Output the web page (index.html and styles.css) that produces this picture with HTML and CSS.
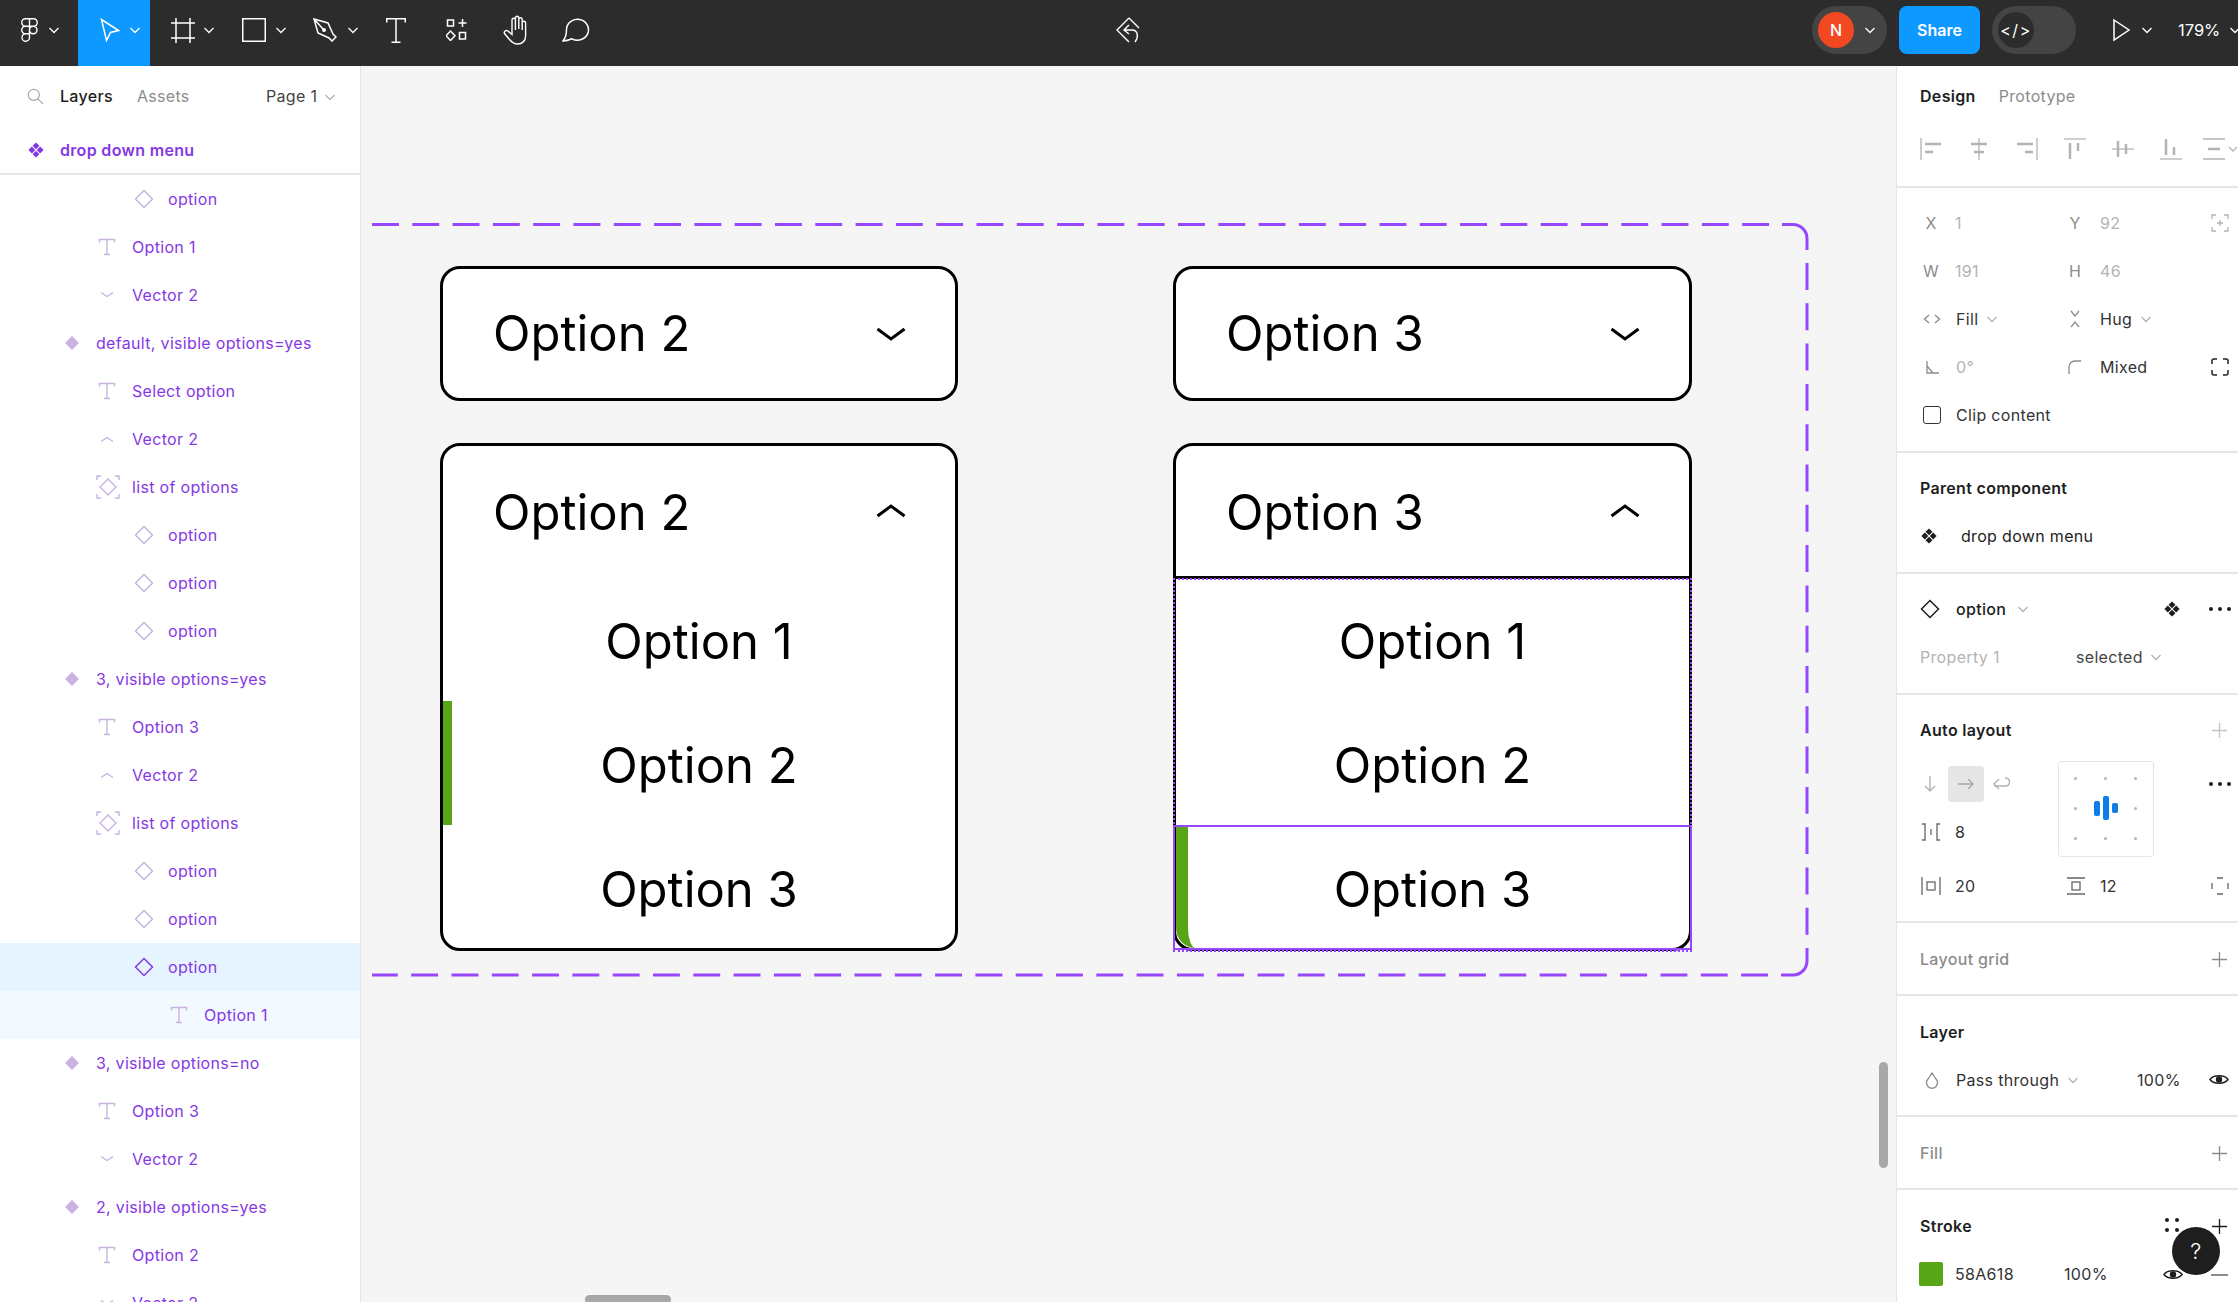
FILE: index.html
```html
<!DOCTYPE html>
<html lang="en">
<head>
<meta charset="utf-8">
<title>drop down menu</title>
<link rel="stylesheet" href="styles.css">
</head>
<body>
<svg class="defs" width="0" height="0" aria-hidden="true">
  <defs>
    <symbol id="i-diamond" viewBox="0 0 20 20"><path d="M10 1.500 18.500 10 10 18.500 1.500 10Z" fill="none" stroke="currentColor" stroke-width="1.500"/></symbol>
    <symbol id="i-solid" viewBox="0 0 20 20"><path d="M10 3 17 10 10 17 3 10Z" fill="currentColor"/></symbol>
    <symbol id="i-text" viewBox="0 0 20 20"><path d="M2.500 5.500V2.500H17.500V5.500M10 2.500V17.500M7 17.500H13" fill="none" stroke="currentColor" stroke-width="1.400"/></symbol>
    <symbol id="i-down" viewBox="0 0 20 20"><path d="M4 7.500 10 11.500 16 7.500" fill="none" stroke="currentColor" stroke-width="1.400"/></symbol>
    <symbol id="i-up" viewBox="0 0 20 20"><path d="M4 12.500 10 8.500 16 12.500" fill="none" stroke="currentColor" stroke-width="1.400"/></symbol>
    <symbol id="i-frame" viewBox="0 0 24 24"><path d="M1 5V1H5M19 1H23V5M1 19V23H5M19 23H23V19" fill="none" stroke="currentColor" stroke-width="1.400"/><path d="M12 4 20 12 12 20 4 12Z" fill="none" stroke="currentColor" stroke-width="1.400"/></symbol>
    <symbol id="i-comp" viewBox="0 0 20 20"><path fill="currentColor" d="M10 .5 14.300 4.800 10 9.100 5.700 4.800ZM10 10.900 14.300 15.200 10 19.500 5.700 15.200ZM4.800 5.700 9.100 10 4.800 14.300 .5 10ZM15.200 5.700 19.500 10 15.200 14.300 10.900 10Z"/></symbol>
    <symbol id="i-caret" viewBox="0 0 12 12"><path d="M1.500 4 6 8.500 10.500 4" fill="none" stroke="currentColor" stroke-width="1.300"/></symbol>
    <symbol id="i-plus" viewBox="0 0 18 18"><path d="M9 1V17M1 9H17" fill="none" stroke="currentColor" stroke-width="1.400"/></symbol>
    <symbol id="i-eye" viewBox="0 0 22 14"><path d="M1 7C5 1.500 17 1.500 21 7 17 12.500 5 12.500 1 7Z" fill="none" stroke="currentColor" stroke-width="1.500"/><circle cx="11" cy="7" r="3.500" fill="currentColor"/></symbol>
  </defs>
</svg>

<div class="app">
  <header class="toolbar">
    <div class="tool-group">
      <div class="tool tool-logo">
        <svg class="ti ti-logo" viewBox="0 0 17 24"><path d="M8.500 .75H4.500A3.750 3.750 0 0 0 4.500 8.250H8.500ZM8.500 .75H12.500A3.750 3.750 0 0 1 12.500 8.250H8.500ZM8.500 8.250H4.500A3.750 3.750 0 0 0 4.500 15.750H8.500ZM8.500 12A3.750 3.750 0 1 0 16 12 3.750 3.750 0 1 0 8.500 12ZM8.500 15.750H4.500A3.750 3.750 0 1 0 8.500 19.500Z" fill="none" stroke="currentColor" stroke-width="1.400"/></svg>
        <svg class="caret"><use href="#i-caret"/></svg>
      </div>
      <div class="tool tool-move">
        <svg class="ti ti-move" viewBox="0 0 20 24"><path d="M1.500 1.500 18.500 12.500 10.500 14.500 6.500 22.500Z" fill="none" stroke="currentColor" stroke-width="1.500"/></svg>
        <svg class="caret"><use href="#i-caret"/></svg>
      </div>
      <div class="tool tool-frame">
        <svg class="ti ti-frame" viewBox="0 0 24 25"><path d="M5 0V25M19 0V25M0 5H24M0 20H24" fill="none" stroke="currentColor" stroke-width="1.500"/></svg>
        <svg class="caret"><use href="#i-caret"/></svg>
      </div>
      <div class="tool tool-rect">
        <svg class="ti ti-rect" viewBox="0 0 24 24"><rect x=".75" y=".75" width="22.500" height="22.500" fill="none" stroke="currentColor" stroke-width="1.500"/></svg>
        <svg class="caret"><use href="#i-caret"/></svg>
      </div>
      <div class="tool tool-pen">
        <svg class="ti ti-pen" viewBox="0 0 24 24"><path d="M1 1 15 5 20 16 23 19 19 23 16 20 5 15ZM1 1 10 11" fill="none" stroke="currentColor" stroke-width="1.500"/><circle cx="11" cy="12" r="2" fill="currentColor"/></svg>
        <svg class="caret"><use href="#i-caret"/></svg>
      </div>
      <div class="tool tool-plain">
        <svg class="ti ti-type" viewBox="0 0 20 25"><path d="M.75 4.500V.75H19.250V4.500M10 .75V24.250M5.500 24.250H14.500" fill="none" stroke="currentColor" stroke-width="1.500"/></svg>
      </div>
      <div class="tool tool-plain">
        <svg class="ti ti-res" viewBox="0 0 21 22"><rect x="1.500" y="1" width="6" height="6" fill="none" stroke="currentColor" stroke-width="1.500"/><path d="M16.500 0V8M12.500 4H20.500" fill="none" stroke="currentColor" stroke-width="1.500"/><path d="M4.500 12 9 16.750 4.500 21.500 0 16.750Z" fill="none" stroke="currentColor" stroke-width="1.500"/><rect x="13.500" y="13.500" width="6" height="6.500" fill="none" stroke="currentColor" stroke-width="1.500"/></svg>
      </div>
      <div class="tool tool-plain">
        <svg class="ti ti-hand" viewBox="0 0 27 30"><path d="M9 15V5A1.700 1.700 0 0 1 12.400 5V15M12.400 14V3A1.700 1.700 0 0 1 15.800 3V14M15.800 14V4.500A1.700 1.700 0 0 1 19.200 4.500V15M19.200 15V8A1.700 1.700 0 0 1 22.600 8V21C22.600 26 19 29 14.500 29 10.500 29 8.500 27 6.500 24.500L1.500 18.500C.5 16.500 3 14.500 5 16L9 19.500V15" fill="none" stroke="currentColor" stroke-width="1.400"/></svg>
      </div>
      <div class="tool tool-plain">
        <svg class="ti ti-comment" viewBox="0 0 28 24"><path d="M4.500 11.500A11 10.500 0 1 1 10 20.800Q5 23 1 23 4.500 19 4.500 11.500Z" fill="none" stroke="currentColor" stroke-width="1.500"/></svg>
      </div>
    </div>

    <div class="tool-center">
      <svg class="ti ti-share" viewBox="0 0 26 26"><path d="M13 1 1 13 13 25M13 1 23 11" fill="none" stroke="currentColor" stroke-width="1.400"/><path d="M13 8 8 13 13 17M8 13H16C22 13 23 20 19 25" fill="none" stroke="currentColor" stroke-width="1.400"/></svg>
    </div>

    <div class="tool-right">
      <div class="avatar-pill">
        <span class="avatar">N</span>
        <svg class="caret"><use href="#i-caret"/></svg>
      </div>
      <span class="share-btn">Share</span>
      <div class="dev-toggle"><span class="dev-knob">&lt;/&gt;</span></div>
      <svg class="ti ti-play" viewBox="0 0 18 24"><path d="M1 2 16 12 1 22Z" fill="none" stroke="currentColor" stroke-width="1.500"/></svg>
      <svg class="caret caret-play"><use href="#i-caret"/></svg>
      <span class="zoom-level">179%</span>
      <svg class="caret caret-zoom"><use href="#i-caret"/></svg>
    </div>
  </header>

  <div class="workspace">
    <aside class="layers">
      <div class="layers-tabs">
        <svg class="search-icon" viewBox="0 0 20 20"><circle cx="8" cy="8" r="6.500" fill="none" stroke="currentColor" stroke-width="1.500"/><path d="M12.500 12.500 19 19" stroke="currentColor" stroke-width="1.500"/></svg>
        <span class="tab tab-active">Layers</span>
        <span class="tab">Assets</span>
        <span class="page-name">Page 1</span>
        <svg class="caret caret-page"><use href="#i-caret"/></svg>
      </div>
      <div class="layers-root">
        <svg class="root-icon"><use href="#i-comp"/></svg>
        <span>drop down menu</span>
      </div>
      <ul class="tree">
        <li class="row lv3"><svg class="ri"><use href="#i-diamond"/></svg>option</li>
        <li class="row lv2"><svg class="ri"><use href="#i-text"/></svg>Option 1</li>
        <li class="row lv2"><svg class="ri"><use href="#i-down"/></svg>Vector 2</li>
        <li class="row lv1"><svg class="ri"><use href="#i-solid"/></svg>default, visible options=yes</li>
        <li class="row lv2"><svg class="ri"><use href="#i-text"/></svg>Select option</li>
        <li class="row lv2"><svg class="ri"><use href="#i-up"/></svg>Vector 2</li>
        <li class="row lv2"><svg class="ri ri-frame"><use href="#i-frame"/></svg>list of options</li>
        <li class="row lv3"><svg class="ri"><use href="#i-diamond"/></svg>option</li>
        <li class="row lv3"><svg class="ri"><use href="#i-diamond"/></svg>option</li>
        <li class="row lv3"><svg class="ri"><use href="#i-diamond"/></svg>option</li>
        <li class="row lv1"><svg class="ri"><use href="#i-solid"/></svg>3, visible options=yes</li>
        <li class="row lv2"><svg class="ri"><use href="#i-text"/></svg>Option 3</li>
        <li class="row lv2"><svg class="ri"><use href="#i-up"/></svg>Vector 2</li>
        <li class="row lv2"><svg class="ri ri-frame"><use href="#i-frame"/></svg>list of options</li>
        <li class="row lv3"><svg class="ri"><use href="#i-diamond"/></svg>option</li>
        <li class="row lv3"><svg class="ri"><use href="#i-diamond"/></svg>option</li>
        <li class="row lv3 row-selected"><svg class="ri"><use href="#i-diamond"/></svg>option</li>
        <li class="row lv4 row-child"><svg class="ri"><use href="#i-text"/></svg>Option 1</li>
        <li class="row lv1"><svg class="ri"><use href="#i-solid"/></svg>3, visible options=no</li>
        <li class="row lv2"><svg class="ri"><use href="#i-text"/></svg>Option 3</li>
        <li class="row lv2"><svg class="ri"><use href="#i-down"/></svg>Vector 2</li>
        <li class="row lv1"><svg class="ri"><use href="#i-solid"/></svg>2, visible options=yes</li>
        <li class="row lv2"><svg class="ri"><use href="#i-text"/></svg>Option 2</li>
        <li class="row lv2"><svg class="ri"><use href="#i-down"/></svg>Vector 2</li>
      </ul>
    </aside>

    <main class="canvas">
      <!-- component set outline: dashed edges, with unbroken rounded corners on the right -->
      <svg class="set-outline" width="1450" height="770" viewBox="0 0 1450 770">
        <g fill="none" stroke="#9747ff" stroke-width="3">
          <path d="M11 2.500H1421" stroke-dasharray="26.900 13.400"/>
          <path d="M1421 2.500H1432A14 14 0 0 1 1446 16.500V28"/>
          <path d="M1446 41V713" stroke-dasharray="26.900 13.400"/>
          <path d="M1446 726V739A14 14 0 0 1 1432 753H1420"/>
          <path d="M1407 753H11" stroke-dasharray="26.900 13.400"/>
        </g>
      </svg>

      <section class="card closed c-left">
        <span class="head-label">Option 2</span>
        <svg class="chev" viewBox="0 0 30 14"><path d="M1.500 2 15 12 28.500 2" fill="none" stroke="#000" stroke-width="3"/></svg>
      </section>
      <section class="card closed c-right">
        <span class="head-label">Option 3</span>
        <svg class="chev" viewBox="0 0 30 14"><path d="M1.500 2 15 12 28.500 2" fill="none" stroke="#000" stroke-width="3"/></svg>
      </section>

      <section class="card open c-left">
        <div class="card-head">
          <span class="head-label">Option 2</span>
          <svg class="chev" viewBox="0 0 30 14"><path d="M1.500 12 15 2 28.500 12" fill="none" stroke="#000" stroke-width="3"/></svg>
        </div>
        <div class="opt">Option 1</div>
        <div class="opt opt-mark">Option 2</div>
        <div class="opt">Option 3</div>
      </section>

      <section class="card open c-right">
        <div class="card-head card-head-ruled">
          <span class="head-label">Option 3</span>
          <svg class="chev" viewBox="0 0 30 14"><path d="M1.500 12 15 2 28.500 12" fill="none" stroke="#000" stroke-width="3"/></svg>
        </div>
        <div class="opt">Option 1</div>
        <div class="opt">Option 2</div>
        <div class="opt opt-mark opt-last">Option 3</div>
        <span class="sel-list"></span>
        <span class="sel-item"></span>
      </section>

      <span class="scroll-v"></span>
      <span class="scroll-h"></span>
    </main>

    <aside class="props">
      <div class="props-tabs">
        <span class="tab tab-active tab-strong">Design</span>
        <span class="tab">Prototype</span>
      </div>

      <div class="p-sec align-row">
        <svg viewBox="0 0 22 22"><path d="M1 0V22" stroke="#b3b3b3" stroke-width="1.300"/><path d="M5 6H21M5 14H13" fill="none" stroke="#b3b3b3" stroke-width="2.500"/></svg>
        <svg viewBox="0 0 22 22"><path d="M11 0V22" stroke="#b3b3b3" stroke-width="1.300"/><path d="M3 6H19M6 14H16" fill="none" stroke="#b3b3b3" stroke-width="2.500"/></svg>
        <svg viewBox="0 0 22 22"><path d="M21 0V22" stroke="#b3b3b3" stroke-width="1.300"/><path d="M1 6H17M9 14H17" fill="none" stroke="#b3b3b3" stroke-width="2.500"/></svg>
        <svg viewBox="0 0 22 22"><path d="M0 1H22" stroke="#b3b3b3" stroke-width="1.300"/><path d="M6 5V21M14 5V13" fill="none" stroke="#b3b3b3" stroke-width="2.500"/></svg>
        <svg viewBox="0 0 22 22"><path d="M0 11H22" stroke="#b3b3b3" stroke-width="1.300"/><path d="M6 3V19M14 6V16" fill="none" stroke="#b3b3b3" stroke-width="2.500"/></svg>
        <svg viewBox="0 0 22 22"><path d="M0 21H22" stroke="#b3b3b3" stroke-width="1.300"/><path d="M6 1V17M14 9V17" fill="none" stroke="#b3b3b3" stroke-width="2.500"/></svg>
        <svg class="align-last" viewBox="0 0 36 22"><path d="M0 1H22M0 21H22" fill="none" stroke="#b3b3b3" stroke-width="1.300"/><path d="M5 11H17" stroke="#b3b3b3" stroke-width="2.500"/><path d="M26 9 30 13 34 9" fill="none" stroke="#b3b3b3" stroke-width="1.300"/></svg>
      </div>

      <div class="p-sec geom">
        <div class="g-row">
          <span class="g-lab">X</span><span class="g-val dim">1</span>
          <span class="g-lab g2">Y</span><span class="g-val dim">92</span>
          <svg class="g-end" viewBox="0 0 18 18"><path d="M1 5V1H5M13 1H17V5M1 13V17H5M13 17H17V13M9 6V12M6 9H12" fill="none" stroke="#b3b3b3" stroke-width="1.300"/></svg>
        </div>
        <div class="g-row">
          <span class="g-lab">W</span><span class="g-val dim">191</span>
          <span class="g-lab g2">H</span><span class="g-val dim">46</span>
        </div>
        <div class="g-row">
          <svg class="g-ic" viewBox="0 0 18 18"><path d="M6 5 1.500 9 6 13M12 5 16.500 9 12 13" fill="none" stroke="#8c8c8c" stroke-width="1.300"/></svg>
          <span class="g-val">Fill</span><svg class="caret caret-lite"><use href="#i-caret"/></svg>
          <svg class="g-ic g2" viewBox="0 0 18 18"><path d="M5 1 9 6 13 1M5 17 9 12 13 17" fill="none" stroke="#8c8c8c" stroke-width="1.300"/></svg>
          <span class="g-val g-hug">Hug</span><svg class="caret caret-lite"><use href="#i-caret"/></svg>
        </div>
        <div class="g-row">
          <svg class="g-ic" viewBox="0 0 18 18"><path d="M4 3V15H16M4 8 10 15" fill="none" stroke="#8c8c8c" stroke-width="1.300"/></svg>
          <span class="g-val dim">0°</span>
          <svg class="g-ic g2" viewBox="0 0 18 18"><path d="M3 16V9A6 6 0 0 1 9 3H15" fill="none" stroke="#8c8c8c" stroke-width="1.300"/></svg>
          <span class="g-val g-mixed">Mixed</span>
          <svg class="g-end" viewBox="0 0 18 18"><path d="M1 6V3A2 2 0 0 1 3 1H6M12 1H15A2 2 0 0 1 17 3V6M1 12V15A2 2 0 0 0 3 17H6M12 17H15A2 2 0 0 0 17 15V12" fill="none" stroke="#222" stroke-width="1.500"/></svg>
        </div>
        <div class="g-row">
          <span class="checkbox"></span><span class="g-val">Clip content</span>
        </div>
      </div>

      <div class="p-sec parent">
        <div class="sec-title sec-strong">Parent component</div>
        <div class="parent-row"><svg class="pc-icon"><use href="#i-comp"/></svg><span>drop down menu</span></div>
      </div>

      <div class="p-sec inst">
        <div class="inst-row">
          <svg class="inst-ic"><use href="#i-diamond"/></svg>
          <span class="inst-name">option</span>
          <svg class="caret caret-lite"><use href="#i-caret"/></svg>
          <svg class="pc-icon inst-comp"><use href="#i-comp"/></svg>
          <span class="dots"><i></i><i></i><i></i></span>
        </div>
        <div class="inst-prop">
          <span class="prop-lab">Property 1</span>
          <span class="prop-val">selected</span>
          <svg class="caret caret-lite"><use href="#i-caret"/></svg>
        </div>
      </div>

      <div class="p-sec auto">
        <div class="sec-head"><span class="sec-title sec-strong">Auto layout</span><svg class="plus plus-lite"><use href="#i-plus"/></svg></div>
        <div class="auto-grid">
          <div class="auto-left">
            <div class="dir-row">
              <svg class="dir" viewBox="0 0 16 20"><path d="M8 2V17M3 12 8 17 13 12" fill="none" stroke="#b3b3b3" stroke-width="1.400"/></svg>
              <span class="dir-on"><svg class="dir" viewBox="0 0 20 16"><path d="M2 8H17M12 3 17 8 12 13" fill="none" stroke="#a8a8a8" stroke-width="1.400"/></svg></span>
              <svg class="dir" viewBox="0 0 20 16"><path d="M7 3 2 8 7 13M2 10H13C19 10 19 2 13 2" fill="none" stroke="#b3b3b3" stroke-width="1.400"/></svg>
            </div>
            <div class="gap-row">
              <svg class="g-ic" viewBox="0 0 20 18"><path d="M1 1H4V17H1M19 1H16V17H19M10 6V12" fill="none" stroke="#666" stroke-width="1.300"/></svg>
              <span class="g-val">8</span>
            </div>
          </div>
          <div class="align-box">
            <i class="d d1"></i><i class="d d2"></i><i class="d d3"></i><i class="d d4"></i><i class="d d6"></i><i class="d d7"></i><i class="d d8"></i><i class="d d9"></i>
            <span class="bars"><b class="b-s"></b><b class="b-l"></b><b class="b-xs"></b></span>
          </div>
          <span class="dots dots-auto"><i></i><i></i><i></i></span>
        </div>
        <div class="pad-row">
          <svg class="g-ic" viewBox="0 0 20 18"><path d="M1 0V18M19 0V18" fill="none" stroke="#666" stroke-width="1.300"/><rect x="6" y="5" width="8" height="8" fill="none" stroke="#666" stroke-width="1.300"/></svg>
          <span class="g-val">20</span>
          <svg class="g-ic g2" viewBox="0 0 20 18"><path d="M1 1H19M1 17H19" fill="none" stroke="#666" stroke-width="1.300"/><rect x="6" y="5" width="8" height="8" fill="none" stroke="#666" stroke-width="1.300"/></svg>
          <span class="g-val">12</span>
          <svg class="g-end" viewBox="0 0 18 18"><path d="M1 6V12M17 6V12M6 1H12M6 17H12" fill="none" stroke="#666" stroke-width="1.300"/></svg>
        </div>
      </div>

      <div class="p-sec tall"><div class="sec-head"><span class="sec-title">Layout grid</span><svg class="plus"><use href="#i-plus"/></svg></div></div>

      <div class="p-sec layer">
        <div class="sec-title sec-strong">Layer</div>
        <div class="layer-row">
          <svg class="g-ic" viewBox="0 0 18 18"><path d="M9 2 13 8A5.500 5.500 0 1 1 5 8Z" fill="none" stroke="#8c8c8c" stroke-width="1.300"/></svg>
          <span class="g-val">Pass through</span><svg class="caret caret-lite"><use href="#i-caret"/></svg>
          <span class="g-val layer-pct">100%</span>
          <svg class="eye"><use href="#i-eye"/></svg>
        </div>
      </div>

      <div class="p-sec tall"><div class="sec-head"><span class="sec-title">Fill</span><svg class="plus"><use href="#i-plus"/></svg></div></div>

      <div class="p-sec stroke">
        <div class="sec-head">
          <span class="sec-title sec-strong">Stroke</span>
          <span class="grid-dots"><i></i><i></i><i></i><i></i></span>
          <svg class="plus plus-dark"><use href="#i-plus"/></svg>
        </div>
        <div class="stroke-row">
          <span class="swatch"></span>
          <span class="g-val stroke-hex">58A618</span>
          <span class="g-val">100%</span>
          <svg class="eye eye-stroke"><use href="#i-eye"/></svg>
          <span class="minus"></span>
        </div>
      </div>
      <span class="help">?</span>
    </aside>
  </div>
</div>
</body>
</html>
```

FILE: styles.css
```css
* { box-sizing: border-box; }
html, body { margin: 0; height: 100%; }
body {
  overflow: hidden;
  background: #fff;
  font-family: Inter, "Liberation Sans", sans-serif;
  font-size: 16px;
  letter-spacing: .32px;
  color: #1e1e1e;
}
.defs { position: absolute; }
.app { width: 2238px; height: 1302px; display: flex; flex-direction: column; overflow: hidden; }

/* top bar */
.toolbar {
  height: 66px;
  flex: none;
  background: #2c2c2c;
  color: #fff;
  display: flex;
  align-items: flex-start;
  justify-content: space-between;
  position: relative;
}
.tool-group { display: flex; height: 100%; }
.tool { display: flex; align-items: center; height: 100%; padding-bottom: 6px; }
.ti { display: block; color: #fff; flex: none; }
.caret { width: 12px; height: 12px; color: #fff; flex: none; }
.tool-logo { width: 78px; padding-left: 21px; gap: 10px; }
.ti-logo { width: 17px; height: 24px; }
.tool-move { width: 72px; background: #0d99ff; padding-left: 22px; gap: 9px; }
.ti-move { width: 20px; height: 24px; }
.tool-frame { width: 72px; padding-left: 21px; gap: 8px; }
.ti-frame { width: 24px; height: 25px; }
.tool-rect { width: 72px; padding-left: 20px; gap: 9px; }
.ti-rect { width: 24px; height: 24px; }
.tool-pen { width: 72px; padding-left: 19px; gap: 10px; }
.ti-pen { width: 24px; height: 24px; }
.tool-plain { width: 60px; justify-content: center; }
.ti-type { width: 20px; height: 25px; }
.ti-res { width: 21px; height: 22px; }
.ti-hand { width: 27px; height: 30px; }
.ti-comment { width: 28px; height: 24px; }

.tool-center { position: absolute; left: 1116px; top: 17px; }
.ti-share { width: 26px; height: 26px; }

.tool-right { display: flex; align-items: center; height: 48px; margin-top: 6px; letter-spacing: 0; }
.avatar-pill {
  width: 75px; height: 48px; border-radius: 24px; background: #444;
  display: flex; align-items: center; padding-left: 6px; gap: 10px;
  margin-right: 12px;
}
.avatar {
  width: 36px; height: 36px; border-radius: 50%; background: #f24822;
  display: flex; align-items: center; justify-content: center;
  font-size: 16px; font-weight: 500;
}
.share-btn {
  width: 81px; height: 48px; background: #0d99ff; border-radius: 8px;
  display: flex; align-items: center; justify-content: center;
  font-size: 16px; font-weight: 600; margin-right: 12px;
}
.dev-toggle { width: 84px; height: 48px; border-radius: 24px; background: #444; padding: 6px; margin-right: 37px; }
.dev-knob {
  width: 36px; height: 36px; border-radius: 50%; background: #2c2c2c;
  display: flex; align-items: center; justify-content: center;
  font-size: 16px; letter-spacing: 1.500px;
}
.ti-play { width: 18px; height: 24px; margin-right: 10px; }
.caret-play { margin-right: 25px; }
.zoom-level { font-size: 16.500px; width: 44px; margin-right: 7px; white-space: nowrap; }
.caret-zoom { margin-right: -3px; }

.workspace { flex: 1; display: flex; min-height: 0; }

/* left layers panel */
.layers { width: 361px; flex: none; background: #fff; border-right: 1px solid #e6e6e6; overflow: hidden; position: relative; z-index: 2; }
.layers-tabs { height: 60px; display: flex; align-items: center; padding-left: 27px; position: relative; }
.search-icon { width: 17px; height: 17px; color: #a8a8a8; margin-right: 16px; }
.tab { color: #8c8c8c; }
.tab-active { color: #1e1e1e; font-weight: 500; }
.layers-tabs .tab { margin-right: 24px; }
.page-name { position: absolute; left: 266px; color: #444; }
.caret-page { position: absolute; left: 324px; top: 25px; color: #b3b3b3; }
.layers-root {
  height: 49px; display: flex; align-items: center;
  padding-left: 28px; gap: 16px;
  color: #8638e5; font-weight: 600;
  border-bottom: 2px solid #e6e6e6;
}
.root-icon { width: 16px; height: 16px; color: #8638e5; }
.tree { margin: 0; padding: 0; list-style: none; }
.row { height: 48px; display: flex; align-items: center; color: #8638e5; position: relative; }
.ri { position: absolute; width: 20px; height: 20px; top: 14px; color: #c8b3e2; }
.ri-frame { width: 24px; height: 24px; top: 12px; }
.lv1 { padding-left: 96px; }
.lv1 .ri { left: 62px; }
.lv2 { padding-left: 132px; }
.lv2 .ri { left: 97px; }
.lv2 .ri-frame { left: 96px; }
.lv3 { padding-left: 168px; }
.lv3 .ri { left: 134px; }
.lv4 { padding-left: 204px; }
.lv4 .ri { left: 169px; }
.row-selected { background: #e5f4ff; }
.row-selected .ri { color: #8638e5; }
.row-child { background: #f2f9ff; }

/* canvas */
.canvas { flex: 1; background: #f5f5f5; position: relative; overflow: hidden; letter-spacing: 0; }
.set-outline { position: absolute; left: 0; top: 156px; }
.card { position: absolute; background: #fff; border: 3px solid #000; border-radius: 20px; }
.c-left { left: 79px; width: 518px; }
.c-right { left: 812px; width: 519px; }
.closed { top: 200px; height: 135px; display: flex; align-items: center; justify-content: space-between; padding: 0 49px 0 50px; }
.open { top: 377px; height: 508px; }
.head-label { font-size: 49px; line-height: 56px; color: #000; }
.chev { width: 30px; height: 14px; display: block; flex: none; }
.card-head { height: 133px; display: flex; align-items: center; justify-content: space-between; padding: 3px 49px 0 50px; border-bottom: 3px solid transparent; }
.card-head .chev { margin-top: -3px; }
.card-head-ruled { border-bottom-color: #000; }
.opt { height: 124px; display: flex; align-items: center; justify-content: center; font-size: 49px; color: #000; position: relative; }
.opt-mark::before { content: ""; position: absolute; left: 0; top: -2px; bottom: 2px; width: 9px; background: #58a618; }
/* last row follows the card's rounded corner, so the bar tapers into it */
.opt-last::before {
  width: 40px; bottom: 3px;
  background: none;
  border-left: 12px solid #58a618;
  border-bottom-left-radius: 20px;
}
.sel-list { position: absolute; left: -3px; right: -3px; top: 132px; bottom: -4px; border: 2px dotted #9747ff; }
.sel-item { position: absolute; left: -3px; right: -3px; top: 379px; bottom: -2px; border: 2px solid #9747ff; }
.scroll-v { position: absolute; left: 1518px; top: 996px; width: 9px; height: 106px; background: #a8a8a8; border-radius: 5px; }
.scroll-h { position: absolute; left: 224px; top: 1229px; width: 86px; height: 9px; background: #a8a8a8; border-radius: 5px; }

/* right properties panel */
.props { width: 342px; flex: none; background: #fff; border-left: 1px solid #e6e6e6; position: relative; overflow: hidden; }
.props-tabs { height: 60px; display: flex; align-items: center; padding-left: 23px; gap: 23px; }
.tab-strong { font-weight: 600; }
.p-sec { border-bottom: 2px solid #e6e6e6; padding-left: 23px; position: relative; }
.align-row { height: 62px; display: flex; align-items: flex-start; padding-top: 12px; gap: 26px; }
.align-row svg { width: 22px; height: 22px; flex: none; }
.align-row svg.align-last { width: 36px; margin-left: -5px; }

.geom { padding: 11px 0 0 23px; height: 265px; }
.g-row { height: 48px; display: flex; align-items: center; position: relative; }
.g-lab { width: 22px; margin-right: 13px; color: #8c8c8c; text-align: center; }
.g-lab.g2 { position: absolute; left: 143px; width: 24px; margin: 0; }
.g-val { color: #333; }
.dim { color: #b3b3b3; }
.g-ic { width: 18px; height: 18px; flex: none; margin: 0 15px 0 3px; }
.g-ic.g2 { position: absolute; left: 146px; margin: 0; }
.g-lab.g2 + .g-val { position: absolute; left: 180px; }
.g-hug, .g-mixed { position: absolute; left: 180px; }
.g-hug + .caret { position: absolute; left: 220px; top: 18px; margin: 0; }
.g-end { position: absolute; right: 9px; width: 18px; height: 18px; }
.caret-lite { color: #b3b3b3; margin-left: 8px; width: 12px; height: 12px; }
.checkbox { width: 18px; height: 18px; border: 1.500px solid #333; border-radius: 3px; margin: 0 15px 0 3px; flex: none; }

.parent { height: 121px; }
.sec-title { color: #8c8c8c; font-weight: 500; line-height: 20px; }
.sec-strong { color: #1e1e1e; font-weight: 600; }
.parent > .sec-title { padding-top: 25px; }
.parent-row { display: flex; align-items: center; gap: 24px; margin-top: 28px; height: 20px; padding-left: 1px; }
.pc-icon { width: 16px; height: 16px; color: #1e1e1e; flex: none; }
.inst { height: 121px; padding-top: 25px; }
.inst-row { display: flex; align-items: center; height: 20px; position: relative; }
.inst-ic { width: 20px; height: 20px; color: #1e1e1e; margin-right: 16px; flex: none; }
.inst-name { font-weight: 500; }
.inst-row .caret-lite { margin-left: 11px; }
.inst-comp { position: absolute; left: 244px; top: 2px; }
.dots { display: flex; gap: 5px; position: absolute; right: 7px; top: 8px; }
.dots i { width: 4px; height: 4px; border-radius: 50%; background: #1e1e1e; display: block; }
.inst-prop { display: flex; align-items: center; margin-top: 28px; height: 20px; position: relative; }
.prop-lab { color: #b3b3b3; }
.prop-val { position: absolute; left: 156px; color: #444; }
.inst-prop .caret-lite { position: absolute; left: 230px; top: 4px; margin: 0; }

.auto { height: 228px; padding-top: 25px; }
.sec-head { display: flex; align-items: center; justify-content: space-between; padding-right: 10px; height: 20px; position: relative; }
.plus { width: 17px; height: 17px; color: #8c8c8c; flex: none; }
.plus-lite { color: #c4c4c4; }
.plus-dark { color: #1e1e1e; }
.auto-grid { position: relative; height: 104px; margin-top: 21px; }
.auto-left { width: 130px; padding-top: 5px; }
.dir-row { display: flex; align-items: center; gap: 5px; height: 36px; margin-bottom: 15px; }
.dir-row > svg:first-child { width: 16px; height: 20px; margin: 0 5px 0 2px; flex: none; }
.dir-row > svg:last-child { width: 20px; height: 16px; margin-left: 3px; flex: none; }
.dir-on { width: 36px; height: 36px; background: #e6e6e6; border-radius: 3px; display: flex; align-items: center; justify-content: center; flex: none; }
.dir-on svg { width: 20px; height: 16px; }
.gap-row { display: flex; align-items: center; height: 30px; }
.gap-row .g-ic, .pad-row > .g-ic:first-child { width: 20px; margin: 0 14px 0 1px; }
.align-box { position: absolute; left: 138px; top: 0; width: 96px; height: 96px; border: 1px solid #e6e6e6; border-radius: 3px; }
.d { position: absolute; width: 3px; height: 3px; border-radius: 50%; background: #b3b3b3; }
.d1 { left: 15px; top: 15px; } .d2 { left: 45px; top: 15px; } .d3 { left: 75px; top: 15px; }
.d4 { left: 15px; top: 45px; } .d6 { left: 75px; top: 45px; }
.d7 { left: 15px; top: 75px; } .d8 { left: 45px; top: 75px; } .d9 { left: 75px; top: 75px; }
.bars { position: absolute; left: 35px; top: 34px; display: flex; align-items: center; gap: 3px; height: 24px; }
.bars b { width: 6px; display: block; background: #0d7de8; border-radius: 2px; }
.b-s { height: 15px; } .b-l { height: 24px; } .b-xs { height: 10px; }
.dots-auto { top: 21px; }
.pad-row { display: flex; align-items: center; height: 20px; position: relative; margin-top: 11px; }
.pad-row .g-ic.g2 { width: 20px; }
.pad-row .g-ic.g2 + .g-val { position: absolute; left: 180px; }

.tall { height: 73px; padding-top: 26px; }
.layer { height: 121px; padding-top: 26px; }
.layer-row { display: flex; align-items: center; position: relative; margin-top: 28px; height: 20px; }
.layer-pct { position: absolute; left: 217px; }
.eye { width: 20px; height: 13px; color: #1e1e1e; position: absolute; right: 9px; top: 3px; }
.stroke { border-bottom: 0; padding-top: 26px; }
.grid-dots { position: absolute; left: 245px; top: 2px; width: 14px; height: 14px; display: grid; grid-template-columns: 4px 4px; gap: 6px; }
.grid-dots i { width: 4px; height: 4px; border-radius: 50%; background: #1e1e1e; display: block; }
.stroke-row { display: flex; align-items: center; margin-top: 26px; height: 24px; position: relative; }
.swatch { width: 24px; height: 24px; background: #58a618; border-radius: 2px; margin-right: 12px; flex: none; margin-left: -1px; }
.stroke-hex { width: 109px; }
.eye-stroke { left: 243px; right: auto; top: 6px; }
.minus { position: absolute; right: 10px; top: 12px; width: 17px; height: 1.500px; background: #8c8c8c; }
.help {
  position: absolute; left: 275px; top: 1161px;
  width: 48px; height: 48px; border-radius: 50%;
  background: #1e1e1e; color: #fff;
  display: flex; align-items: center; justify-content: center;
  font-size: 22px; font-weight: 300;
}
```
